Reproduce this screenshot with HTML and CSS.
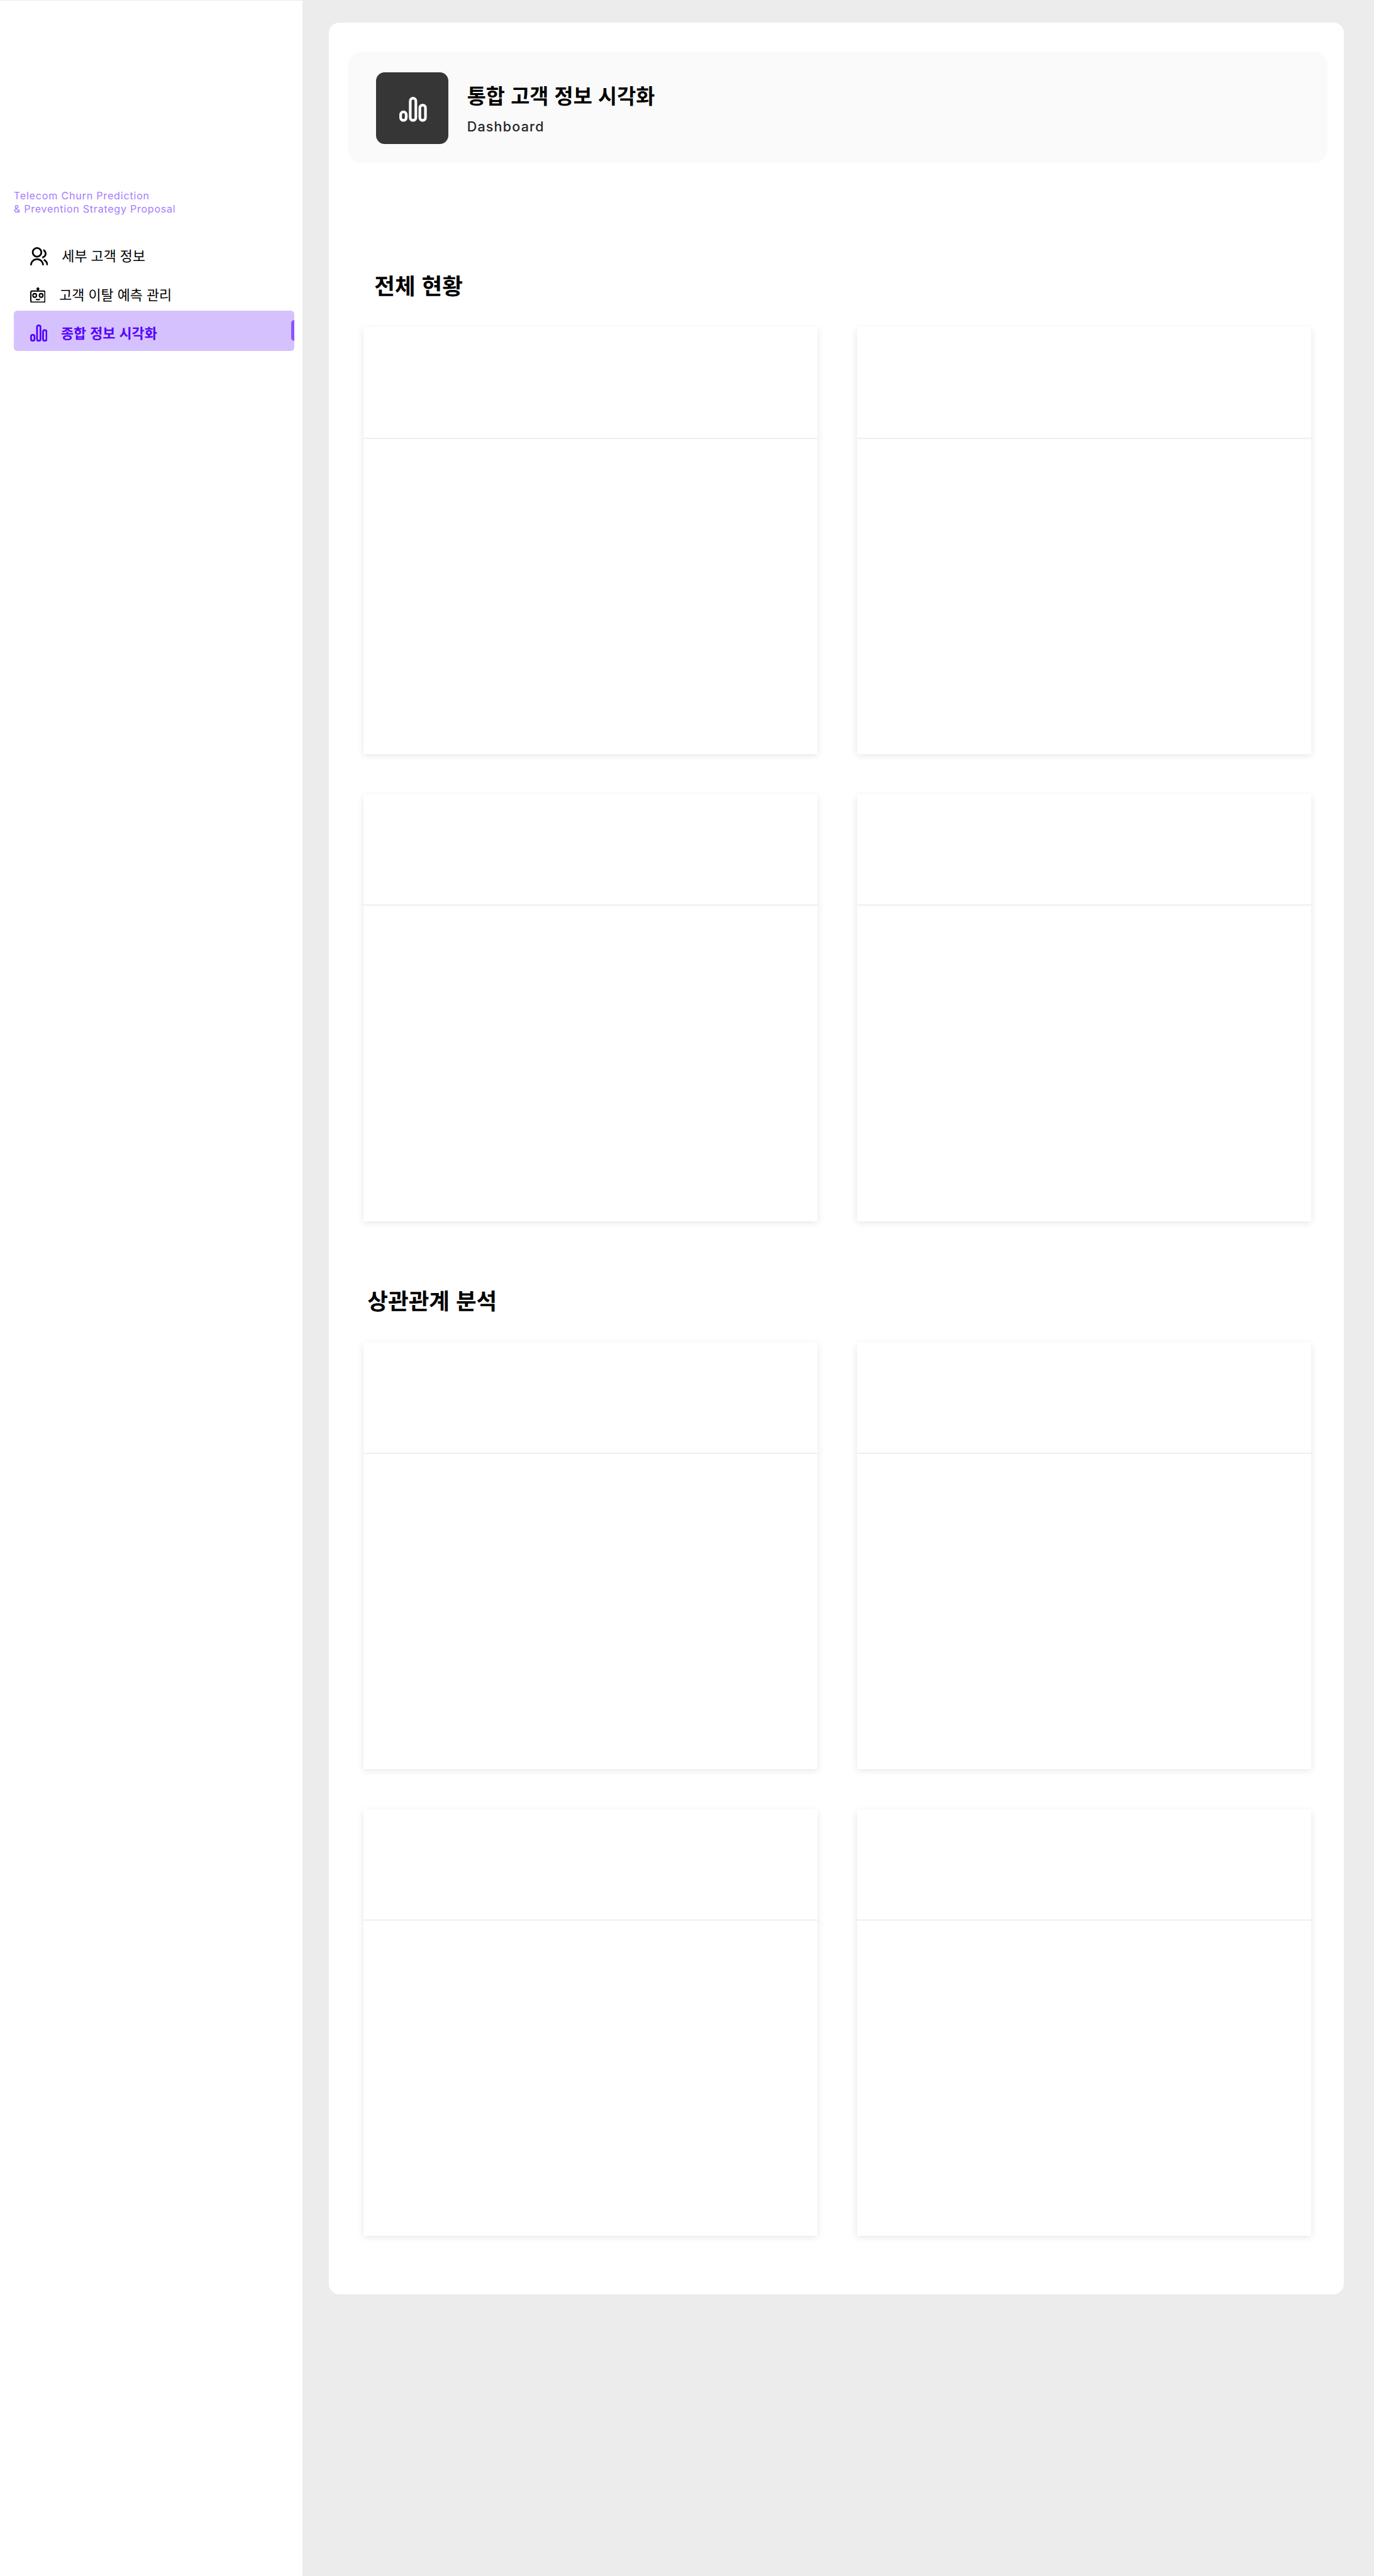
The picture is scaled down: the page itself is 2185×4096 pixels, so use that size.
FILE: index.html
```html
<!DOCTYPE html>
<html lang="ko">
<head>
<meta charset="utf-8">
<title>통합 고객 정보 시각화</title>
<link rel="stylesheet" href="styles.css">
</head>
<body>
<div class="app">
  <aside class="sidebar">
    <p class="brand"><span class="brand-line brand-first">Telecom Churn Prediction</span><span class="brand-line brand-second">&amp; Prevention Strategy Proposal</span></p>
    <nav class="nav">
      <a class="nav-item nav-customers">
        <svg class="icon-users" viewBox="2 1 21 21" fill="currentColor"><path d="M2 22C2 17.58 5.58 14 10 14C14.42 14 18 17.58 18 22H16C16 18.69 13.31 16 10 16C6.69 16 4 18.69 4 22H2ZM10 13C6.685 13 4 10.315 4 7C4 3.685 6.685 1 10 1C13.315 1 16 3.685 16 7C16 10.315 13.315 13 10 13ZM10 11C12.21 11 14 9.21 14 7C14 4.79 12.21 3 10 3C7.79 3 6 4.79 6 7C6 9.21 7.79 11 10 11ZM18.284 14.703C21.064 15.956 23 18.752 23 22H21C21 19.564 19.548 17.467 17.463 16.527L18.284 14.703ZM17.596 3.413C19.594 4.237 21 6.204 21 8.5C21 11.37 18.804 13.725 16 13.978V11.965C17.697 11.722 19 10.264 19 8.5C19 7.119 18.202 5.926 17.042 5.356L17.596 3.413Z"/></svg>
        <span>세부 고객 정보</span>
      </a>
      <a class="nav-item nav-churn">
        <svg class="icon-robot" viewBox="0 0 36 36" fill="none" stroke="currentColor" stroke-width="3"><rect x="1.5" y="8.3" width="33" height="26.2" rx="3"/><circle cx="18" cy="3.3" r="3.3" fill="currentColor" stroke="none"/><path d="M18 4v4M13.7 26.6a4.6 3.2 0 0 0 8.6 0"/><circle cx="10.5" cy="18.7" r="4.2"/><circle cx="25.5" cy="18.7" r="4.2"/></svg>
        <span>고객 이탈 예측 관리</span>
      </a>
      <a class="nav-item nav-charts active">
        <svg class="icon-bars" viewBox="0 0 40 40" fill="none" stroke="currentColor" stroke-width="4"><rect x="2" y="24" width="8" height="14" rx="4"/><rect x="16" y="2" width="8" height="36" rx="4"/><rect x="30" y="13" width="8" height="25" rx="4"/></svg>
        <span>종합 정보 시각화</span>
        <i class="marker"></i>
      </a>
    </nav>
  </aside>
  <main class="panel">
    <header class="page-head">
      <div class="head-icon">
        <svg viewBox="0 0 64 58" fill="none" stroke="currentColor" stroke-width="6.2"><rect x="3.1" y="35.1" width="13" height="19.8" rx="6.5"/><rect x="25.5" y="3.1" width="13" height="51.8" rx="6.5"/><rect x="47.9" y="19.1" width="13" height="35.8" rx="6.5"/></svg>
      </div>
      <div class="head-text">
        <h1>통합 고객 정보 시각화</h1>
        <p>Dashboard</p>
      </div>
    </header>
    <section class="overview">
      <h2>전체 현황</h2>
      <div class="grid">
        <article class="card"><div class="card-head"></div></article>
        <article class="card"><div class="card-head"></div></article>
        <article class="card"><div class="card-head"></div></article>
        <article class="card"><div class="card-head"></div></article>
      </div>
    </section>
    <section class="correlation">
      <h2>상관관계 분석</h2>
      <div class="grid">
        <article class="card"><div class="card-head"></div></article>
        <article class="card"><div class="card-head"></div></article>
        <article class="card"><div class="card-head"></div></article>
        <article class="card"><div class="card-head"></div></article>
      </div>
    </section>
  </main>
</div>
</body>
</html>
```
FILE: styles.css
```css
:root { --u: 0.6827px; }
* { box-sizing: border-box; margin: 0; padding: 0; }
html { overflow: hidden; }
body {
  background: #ececec;
  color: #000;
  font-family: "Noto Sans CJK KR", sans-serif;
}
.app {
  display: flex;
  align-items: flex-start;
  height: 4096px;
  overflow: hidden;
}
.sidebar {
  flex: none;
  width: calc(704 * var(--u));
  height: 100%;
  background: #fff;
  border-top: 1px solid #ececec;
  padding: calc(439.8 * var(--u)) calc(18 * var(--u)) 0 calc(32 * var(--u));
}
.brand {
  height: calc(60 * var(--u));
  color: #a77bff;
  font-family: Inter, "Liberation Sans", sans-serif;
  font-size: calc(23.6 * var(--u));
  line-height: calc(30 * var(--u));
}
.brand-line { display: block; white-space: nowrap; }
.brand-first { letter-spacing: 0.78px; }
.brand-second { letter-spacing: 0.72px; }
.nav { padding-top: calc(46.7 * var(--u)); }
.nav-item {
  position: relative;
  display: flex;
  align-items: center;
  height: calc(90 * var(--u));
  padding-left: calc(38 * var(--u));
  font-size: calc(32 * var(--u));
  line-height: calc(48 * var(--u));
  white-space: nowrap;
}
.nav-item svg { flex: none; }
.icon-users { width: calc(42 * var(--u)); height: calc(42 * var(--u)); margin-right: calc(32 * var(--u)); }
.icon-robot { width: calc(36 * var(--u)); height: calc(36 * var(--u)); margin-right: calc(32 * var(--u)); }
.icon-bars { width: calc(40 * var(--u)); height: calc(40 * var(--u)); margin-right: calc(32 * var(--u)); }
.nav-item span { margin-top: calc(-2 * var(--u)); }
.nav-customers { padding-top: calc(7 * var(--u)); }
.nav-churn { height: calc(86 * var(--u)); padding-top: calc(12 * var(--u)); }
.nav-charts { height: calc(94 * var(--u)); padding-top: calc(10 * var(--u)); }
.active {
  background: #d6c1ff;
  color: #5200ff;
  font-weight: 700;
  border-radius: calc(8 * var(--u));
}
.nav-item.active span { margin-top: 0; }
.marker {
  position: absolute;
  right: 0;
  top: calc(22 * var(--u));
  width: calc(8 * var(--u));
  height: calc(48 * var(--u));
  background: #8c52ff;
  border-radius: calc(8 * var(--u)) 0 0 calc(8 * var(--u));
}
.panel {
  width: calc(2364 * var(--u));
  height: calc(5292 * var(--u));
  margin: calc(52 * var(--u)) 0 0 calc(62 * var(--u));
  padding-top: calc(68 * var(--u));
  background: #fff;
  border-radius: calc(24 * var(--u));
}
.page-head {
  display: flex;
  align-items: flex-start;
  height: calc(260 * var(--u));
  margin: 0 calc(38 * var(--u)) 0 calc(44 * var(--u));
  padding: calc(48 * var(--u)) calc(66 * var(--u));
  background: #fafafa;
  border-radius: calc(32 * var(--u));
}
.head-icon {
  flex: none;
  width: calc(168 * var(--u));
  height: calc(168 * var(--u));
  padding: calc(58 * var(--u)) 0 0 calc(54 * var(--u));
  background: #363636;
  color: #fff;
  border-radius: calc(20 * var(--u));
}
.head-icon svg { display: block; width: calc(64 * var(--u)); height: calc(58 * var(--u)); }
.head-text { padding: calc(17 * var(--u)) 0 0 calc(44 * var(--u)); }
h1 {
  font-size: calc(48 * var(--u));
  line-height: calc(72 * var(--u));
  font-weight: 700;
  white-space: nowrap;
}
.head-text p {
  padding-top: calc(18 * var(--u));
  color: #262626;
  font-family: Inter, "Liberation Sans", sans-serif;
  font-size: calc(31.5 * var(--u));
  line-height: calc(40 * var(--u));
  font-weight: 500;
  letter-spacing: 1.2px;
}
section { padding: 0 calc(76 * var(--u)) 0 calc(80 * var(--u)); }
h2 {
  font-size: calc(52 * var(--u));
  line-height: calc(76 * var(--u));
  font-weight: 700;
}
.overview { padding-top: calc(246 * var(--u)); }
.overview h2 { padding-left: calc(26 * var(--u)); margin-bottom: calc(60 * var(--u)); }
.correlation { padding-top: calc(146 * var(--u)); }
.correlation h2 { padding-left: calc(10 * var(--u)); margin-bottom: calc(60 * var(--u)); }
.grid {
  display: grid;
  grid-template-columns: repeat(2, calc(1058 * var(--u)));
  grid-auto-rows: calc(994 * var(--u));
  gap: calc(94 * var(--u)) calc(92 * var(--u));
}
.card {
  background: #fff;
  box-shadow: 0 calc(4 * var(--u)) calc(16 * var(--u)) rgba(0, 0, 0, 0.1);
}
.card-head {
  height: calc(260 * var(--u));
  border-bottom: calc(4 * var(--u)) solid #efefef;
}
```
